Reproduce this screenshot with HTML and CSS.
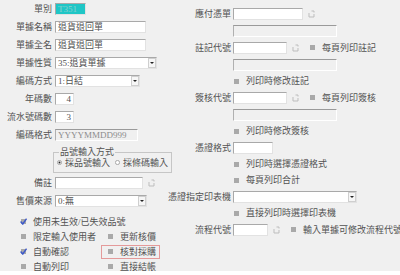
FILE: index.html
```html
<!DOCTYPE html>
<html lang="zh-Hant">
<head>
    <meta charset="UTF-8">
    <title>單別設定</title>
    <link rel="stylesheet" href="styles.css">
</head>
<body>
    <div class="panel">
        <!-- 左欄 -->
        <div class="left">
            <div class="row"><span class="lbl">單別</span><span class="fld cyan w31">T351</span></div>
            <div class="row"><span class="lbl">單據名稱</span><span class="fld w91">退貨退回單</span></div>
            <div class="row"><span class="lbl">單據全名</span><span class="fld w91">退貨退回單</span></div>
            <div class="row"><span class="lbl">單據性質</span><span class="fld sel w102"><span class="txt">35:退貨單據</span><span class="dd"></span></span></div>
            <div class="row"><span class="lbl">編碼方式</span><span class="fld sel w85"><span class="txt">1:日結</span><span class="dd"></span></span></div>
            <div class="row"><span class="lbl">年碼數</span><span class="fld num w19">4</span></div>
            <div class="row"><span class="lbl">流水號碼數</span><span class="fld num w19">3</span></div>
            <div class="row"><span class="lbl">編碼格式</span><span class="fld off w83">YYYYMMDD999</span></div>
            <fieldset class="group">
                <legend>品號輸入方式</legend>
                <div class="radios">
                    <span class="rd"><svg class="dot" viewBox="0 0 6 6"><circle cx="3" cy="3" r="2.5" fill="#fff" stroke="#9a9a9a"/><circle cx="3" cy="3" r="1.2" fill="#222"/></svg>採品號輸入</span>
                    <span class="rd"><svg class="dot" viewBox="0 0 6 6"><circle cx="3" cy="3" r="2.5" fill="#fff" stroke="#9a9a9a"/></svg>採條碼輸入</span>
                </div>
            </fieldset>
            <div class="row first"><span class="lbl">備註</span><span class="fld w88"></span><svg class="look" viewBox="0 0 7 8"><path d="M1 3V7H6V4M3.5 1H6V2.5" fill="none" stroke="#bdbdbd"/></svg></div>
            <div class="row"><span class="lbl">售價來源</span><span class="fld sel w92"><span class="txt">0:無</span><span class="dd"></span></span></div>
            <div class="checks">
                <span class="cb wide"><svg class="tick" viewBox="0 0 7 7"><rect x="1" y="1" width="5" height="5" fill="#a8a8a8"/><path d="M0.6 3.6L2.8 6L6.6 0.6" fill="none" stroke="#3d59c9" stroke-width="1.5"/></svg>使用未生效/已失效品號</span>
                <span class="cb"><i class="sq"></i>限定輸入使用者</span>
                <span class="cb c2"><i class="sq"></i>更新核價</span>
                <span class="cb"><svg class="tick" viewBox="0 0 7 7"><rect x="1" y="1" width="5" height="5" fill="#a8a8a8"/><path d="M0.6 3.6L2.8 6L6.6 0.6" fill="none" stroke="#3d59c9" stroke-width="1.5"/></svg>自動確認</span>
                <span class="cb c2 red"><i class="sq"></i>核對採購</span>
                <span class="cb"><i class="sq"></i>自動列印</span>
                <span class="cb c2"><i class="sq"></i>直接結帳</span>
            </div>
        </div>

        <!-- 右欄 -->
        <div class="mid">
            <div class="mrow"><span class="mlbl">應付憑單</span><span class="fld w70"></span><svg class="look" viewBox="0 0 7 8"><path d="M1 3V7H6V4M3.5 1H6V2.5" fill="none" stroke="#bdbdbd"/></svg></div>
            <div class="mrow"><span class="mlbl"></span><span class="fld off w104"></span></div>
            <div class="mrow"><span class="mlbl">註記代號</span><span class="fld w54"></span><svg class="look" viewBox="0 0 7 8"><path d="M1 3V7H6V4M3.5 1H6V2.5" fill="none" stroke="#bdbdbd"/></svg><span class="cb after"><i class="sq"></i>每頁列印註記</span></div>
            <div class="mrow"><span class="mlbl"></span><span class="fld off w104"></span></div>
            <div class="mrow c"><span class="cb"><i class="sq"></i>列印時修改註記</span></div>
            <div class="mrow"><span class="mlbl">簽核代號</span><span class="fld w54"></span><svg class="look" viewBox="0 0 7 8"><path d="M1 3V7H6V4M3.5 1H6V2.5" fill="none" stroke="#bdbdbd"/></svg><span class="cb after"><i class="sq"></i>每頁列印簽核</span></div>
            <div class="mrow"><span class="mlbl"></span><span class="fld off w104"></span></div>
            <div class="mrow c"><span class="cb"><i class="sq"></i>列印時修改簽核</span></div>
            <div class="mrow"><span class="mlbl">憑證格式</span><span class="fld w40"></span></div>
            <div class="mrow c"><span class="cb"><i class="sq"></i>列印時選擇憑證格式</span></div>
            <div class="mrow c"><span class="cb"><i class="sq"></i>每頁列印合計</span></div>
            <div class="mrow"><span class="mlbl">憑證指定印表機</span><span class="fld sel w124"><span class="txt"></span><span class="dd"></span></span></div>
            <div class="mrow c"><span class="cb"><i class="sq"></i>直接列印時選擇印表機</span></div>
            <div class="mrow"><span class="mlbl">流程代號</span><span class="fld w35"></span><svg class="look" viewBox="0 0 7 8"><path d="M1 3V7H6V4M3.5 1H6V2.5" fill="none" stroke="#bdbdbd"/></svg><span class="cb after"><i class="sq"></i>輸入單據可修改流程代號</span></div>
        </div>
    </div>
</body>
</html>
```
FILE: styles.css
```css
*{margin:0;padding:0;box-sizing:border-box;}
body{background:#fff;color:#525252;font:9px/10px "Liberation Serif","Noto Sans CJK TC",serif;}
.panel{display:grid;grid-template-columns:172px 1fr;height:271px;background:#f0f0f0;overflow:hidden;}

/* 左欄 */
.row{display:flex;align-items:center;height:18px;}
.row.first{margin-top:1px;}
.lbl{flex:none;width:52px;margin-right:3px;text-align:right;white-space:nowrap;}

/* 欄位 */
.fld{flex:none;display:flex;align-items:center;height:12px;padding:0 2px;background:#fff;border:1px solid;border-color:#a9a9a9 #e2e2e2 #e2e2e2 #a9a9a9;white-space:nowrap;overflow:hidden;}
.fld.off{background:#f0f0f0;color:#8c8c8c;border-color:#9a9a9a #fff #fff #b0b0b0;}
.fld.cyan{background:#1fc6c6;color:#8ccfcf;}
.fld.num{justify-content:flex-end;}
.sel{padding-right:0;}
.sel .txt{flex:1;}
.dd{flex:none;position:relative;width:8px;height:10px;background:#f6f6f6;border:1px solid #cfcfcf;}
.dd::after{content:"";position:absolute;left:1px;top:3px;border-top:2px solid #222;border-left:2px solid transparent;border-right:2px solid transparent;}

.w19{width:19px;}
.w31{width:31px;}
.w35{width:35px;}
.w40{width:40px;}
.w54{width:54px;}
.w70{width:70px;}
.w83{width:83px;}
.w85{width:85px;}
.w88{width:88px;}
.w91{width:91px;}
.w92{width:92px;}
.w102{width:102px;}
.w104{width:104px;}
.w124{width:124px;}

.look{flex:none;width:7px;height:8px;margin-left:5px;}

/* 品號輸入方式 */
.group{margin:3px 0 0 53px;width:118px;padding:0 3px 4px;border:1px solid #c6c6c6;}
.group legend{margin-left:2px;padding:0 1px;line-height:10px;}
.radios{display:flex;align-items:center;height:11px;gap:5px;}
.rd{display:inline-flex;align-items:center;gap:3px;white-space:nowrap;}
.dot{width:5px;height:5px;}

/* 核取方塊 */
.cb{display:inline-flex;align-items:center;gap:6px;white-space:nowrap;}
.sq{display:block;width:5px;height:5px;margin:0 1px;background:#a9a9a9;}
.tick{display:block;width:7px;height:7px;}
.checks{display:grid;grid-template-columns:81px auto;grid-auto-rows:15px;align-items:center;padding-left:20px;margin-top:4px;}
.checks .wide{grid-column:1 / 3;}
.checks .c2{padding-left:6px;}
.checks .red{width:59px;height:14px;padding-left:5px;border:1px solid #e49a9a;}

/* 右欄 */
.mid{padding-top:5px;}
.mrow{display:flex;align-items:center;height:17px;}
.mrow.c{height:16px;padding-left:61px;}
.mlbl{flex:none;display:flex;justify-content:flex-end;width:59px;margin-right:2px;white-space:nowrap;}
.mrow .after{margin-left:10px;}
```
